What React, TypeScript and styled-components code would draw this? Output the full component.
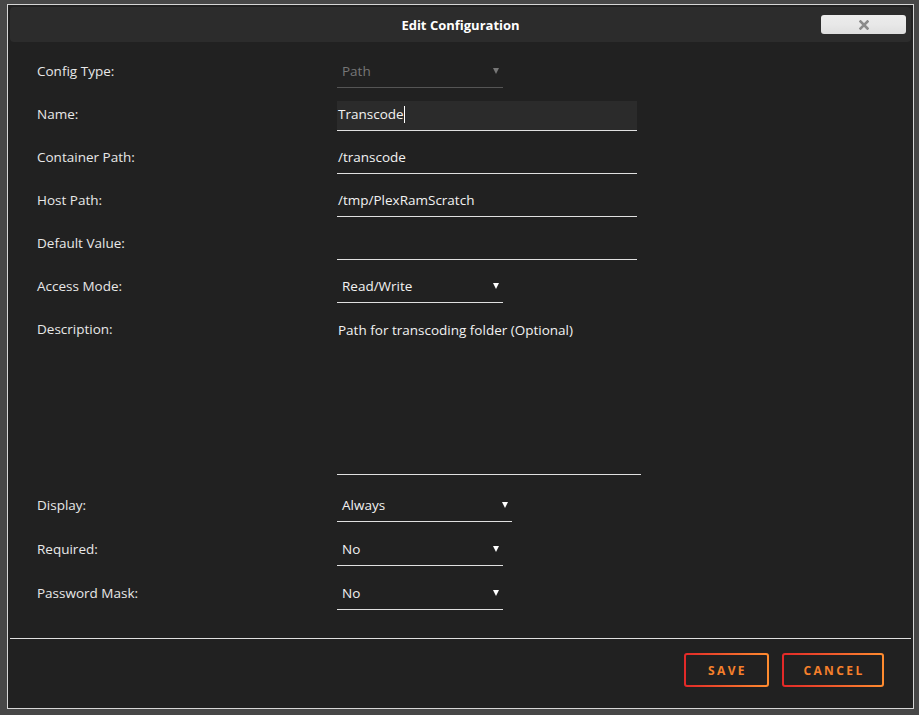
import React from 'react';
import styled, { createGlobalStyle } from 'styled-components';

const GlobalStyle = createGlobalStyle`
  html, body {
    margin: 0;
    padding: 0;
    background: #474747;
    font-family: "Open Sans", "Noto Sans", sans-serif;
  }
`;

const Page = styled.div`
  width: 919px;
  height: 715px;
  padding: 4px 0 0 7px;
  box-sizing: border-box;
`;

const Dialog = styled.div`
  width: 907px;
  height: 705px;
  box-sizing: border-box;
  border: 1px solid #d6d6d6;
  background: #212121;
  padding: 2px;
  display: flex;
  flex-direction: column;
`;

const TitleBar = styled.div`
  height: 35px;
  flex-shrink: 0;
  background: #2c2c2c;
  border-radius: 4px;
  display: grid;
  grid-template-columns: 1fr auto 1fr;
  align-items: center;
`;

const Title = styled.div`
  grid-column: 2;
  color: #ffffff;
  font-size: 13px;
  font-weight: 700;
  padding-top: 1px;
`;

const CloseButton = styled.button`
  grid-column: 3;
  justify-self: end;
  margin: 0 5px 0 0;
  width: 85px;
  height: 19px;
  border: none;
  border-radius: 3px;
  background: linear-gradient(#ececec 0%, #e8e8e8 50%, #dedede 100%);
  display: flex;
  align-items: center;
  justify-content: center;
  padding: 0;
  cursor: pointer;
`;

const Form = styled.div`
  padding: 16px 0 0 27px;
  flex: 1;
`;

const Row = styled.div<{ $h: number }>`
  display: flex;
  height: ${(p) => p.$h}px;
`;

const Label = styled.div`
  width: 300px;
  padding-top: 4px;
  line-height: 18px;
  font-size: 13.5px;
  color: #e8e8e8;
`;

const Field = styled.div<{ $w: number; $active?: boolean }>`
  width: ${(p) => p.$w}px;
  height: 30px;
  box-sizing: border-box;
  border-bottom: 1px solid #e0e0e0;
  background: ${(p) => (p.$active ? '#2b2b2b' : 'transparent')};
  padding: 4px 1px 0;
  line-height: 18px;
  font-size: 13.5px;
  color: #f2f2f2;
`;

const Caret = styled.span`
  display: inline-block;
  width: 1px;
  height: 17px;
  background: #ffffff;
  vertical-align: -4px;
`;

const Select = styled.div<{ $w: number; $disabled?: boolean }>`
  width: ${(p) => p.$w}px;
  height: 30px;
  box-sizing: border-box;
  border-bottom: 1px solid ${(p) => (p.$disabled ? '#555' : '#e0e0e0')};
  padding: 4px 4px 0 5px;
  line-height: 18px;
  font-size: 13.5px;
  color: ${(p) => (p.$disabled ? '#777' : '#f2f2f2')};
  display: flex;
  justify-content: space-between;
  align-items: flex-start;
`;

const Arrow = styled.span<{ $disabled?: boolean }>`
  margin-top: 6px;
  width: 0;
  height: 0;
  border-left: 3px solid transparent;
  border-right: 3px solid transparent;
  border-top: 6px solid ${(p) => (p.$disabled ? '#777' : '#ffffff')};
`;

const TextArea = styled.div`
  width: 304px;
  height: 159px;
  box-sizing: border-box;
  border-bottom: 1px solid #e0e0e0;
  padding: 4px 1px 0;
  line-height: 20px;
  font-size: 13.5px;
  color: #f2f2f2;
`;

const Divider = styled.hr`
  margin: 0;
  border: none;
  border-top: 1px solid #e0e0e0;
`;

const Footer = styled.div`
  display: flex;
  justify-content: flex-end;
  gap: 13px;
  padding: 14px 27px 19px 0;
`;

const ActionButton = styled.button<{ $w: number }>`
  width: ${(p) => p.$w}px;
  height: 34px;
  border: 2px solid transparent;
  border-radius: 3px;
  background: linear-gradient(#212121, #212121) padding-box,
    linear-gradient(90deg, #e22828, #ff8c2f) border-box;
  color: #f6802b;
  font-family: "Open Sans", "Noto Sans", sans-serif;
  font-size: 12px;
  font-weight: 700;
  letter-spacing: 2.4px;
  padding: 0 0 0 2px;
  cursor: pointer;
`;

const CloseIcon = () => (
  <svg width="10" height="10" viewBox="0 0 10 10">
    <path d="M1.5 1.5 L8.5 8.5 M8.5 1.5 L1.5 8.5" stroke="#8a8a8a" strokeWidth="2.6" strokeLinecap="square" />
  </svg>
);

const SelectBox: React.FC<{ value: string; width: number; disabled?: boolean }> = ({ value, width, disabled }) => (
  <Select $w={width} $disabled={disabled}>
    <span>{value}</span>
    <Arrow $disabled={disabled} />
  </Select>
);

export default function App() {
  return (
    <>
      <GlobalStyle />
      <Page>
        <Dialog>
          <TitleBar>
            <Title>Edit Configuration</Title>
            <CloseButton>
              <CloseIcon />
            </CloseButton>
          </TitleBar>

          <Form>
            <Row $h={43}>
              <Label>Config Type:</Label>
              <SelectBox value="Path" width={166} disabled />
            </Row>
            <Row $h={43}>
              <Label>Name:</Label>
              <Field $w={300} $active>
                Transcode
                <Caret />
              </Field>
            </Row>
            <Row $h={43}>
              <Label>Container Path:</Label>
              <Field $w={300}>/transcode</Field>
            </Row>
            <Row $h={43}>
              <Label>Host Path:</Label>
              <Field $w={300}>/tmp/PlexRamScratch</Field>
            </Row>
            <Row $h={43}>
              <Label>Default Value:</Label>
              <Field $w={300} />
            </Row>
            <Row $h={43}>
              <Label>Access Mode:</Label>
              <SelectBox value="Read/Write" width={166} />
            </Row>
            <Row $h={176}>
              <Label>Description:</Label>
              <TextArea>Path for transcoding folder (Optional)</TextArea>
            </Row>
            <Row $h={44}>
              <Label>Display:</Label>
              <SelectBox value="Always" width={175} />
            </Row>
            <Row $h={44}>
              <Label>Required:</Label>
              <SelectBox value="No" width={166} />
            </Row>
            <Row $h={44}>
              <Label>Password Mask:</Label>
              <SelectBox value="No" width={166} />
            </Row>
          </Form>

          <Divider />
          <Footer>
            <ActionButton $w={85}>SAVE</ActionButton>
            <ActionButton $w={102}>CANCEL</ActionButton>
          </Footer>
        </Dialog>
      </Page>
    </>
  );
}
